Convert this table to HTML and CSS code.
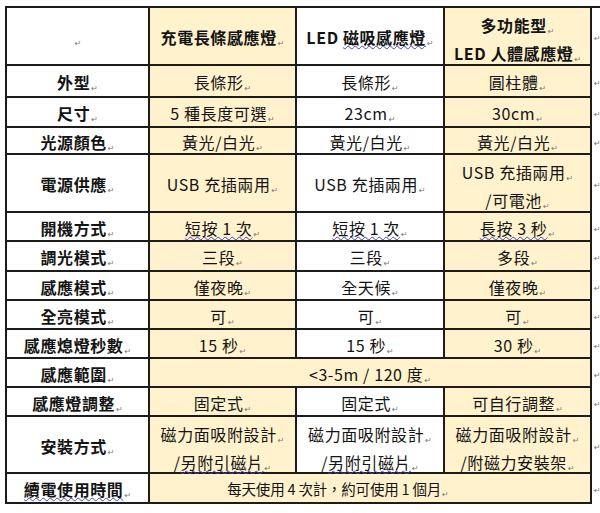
FILE: index.html
```html
<!DOCTYPE html>
<html lang="zh-Hant">
<head>
<meta charset="utf-8">
<link rel="stylesheet" href="styles.css">
<title>感應燈比較</title>
</head>
<body>
<div class="sheet">
  <div class="grid">
    <div class="c lab"><span><span class="pm">↵</span></span></div>
    <div class="c y b"><span>充電長條感應燈<span class="pm">↵</span></span></div>
    <div class="c b"><span>LED <span class="sp">磁吸感應燈</span><span class="pm">↵</span></span></div>
    <div class="c y b two"><span class="ln">多功能型<span class="pm">↵</span></span><span class="ln">LED 人體感應燈<span class="pm">↵</span></span></div>
    <div class="e"><span class="pm">↵</span></div>

    <div class="c lab"><span>外型<span class="pm">↵</span></span></div>
    <div class="c y"><span>長條形<span class="pm">↵</span></span></div>
    <div class="c"><span>長條形<span class="pm">↵</span></span></div>
    <div class="c y"><span>圓柱體<span class="pm">↵</span></span></div>
    <div class="e"><span class="pm">↵</span></div>

    <div class="c lab"><span>尺寸<span class="pm">↵</span></span></div>
    <div class="c y"><span>5 種長度可選<span class="pm">↵</span></span></div>
    <div class="c"><span>23cm<span class="pm">↵</span></span></div>
    <div class="c y"><span>30cm<span class="pm">↵</span></span></div>
    <div class="e"><span class="pm">↵</span></div>

    <div class="c lab"><span>光源顏色<span class="pm">↵</span></span></div>
    <div class="c y"><span>黃光/白光<span class="pm">↵</span></span></div>
    <div class="c"><span>黃光/白光<span class="pm">↵</span></span></div>
    <div class="c y"><span>黃光/白光<span class="pm">↵</span></span></div>
    <div class="e"><span class="pm">↵</span></div>

    <div class="c lab"><span>電源供應<span class="pm">↵</span></span></div>
    <div class="c y"><span>USB 充插兩用<span class="pm">↵</span></span></div>
    <div class="c"><span>USB 充插兩用<span class="pm">↵</span></span></div>
    <div class="c y two"><span class="ln">USB 充插兩用<span class="pm">↵</span></span><span class="ln">/可電池<span class="pm">↵</span></span></div>
    <div class="e"><span class="pm">↵</span></div>

    <div class="c lab"><span>開機方式<span class="pm">↵</span></span></div>
    <div class="c y"><span><span class="sp">短按 1 次</span><span class="pm">↵</span></span></div>
    <div class="c"><span><span class="sp">短按 1 次</span><span class="pm">↵</span></span></div>
    <div class="c y"><span><span class="sp">長按 3 秒</span><span class="pm">↵</span></span></div>
    <div class="e"><span class="pm">↵</span></div>

    <div class="c lab"><span>調光模式<span class="pm">↵</span></span></div>
    <div class="c y"><span>三段<span class="pm">↵</span></span></div>
    <div class="c"><span>三段<span class="pm">↵</span></span></div>
    <div class="c y"><span>多段<span class="pm">↵</span></span></div>
    <div class="e"><span class="pm">↵</span></div>

    <div class="c lab"><span>感應模式<span class="pm">↵</span></span></div>
    <div class="c y"><span>僅夜晚<span class="pm">↵</span></span></div>
    <div class="c"><span>全天候<span class="pm">↵</span></span></div>
    <div class="c y"><span>僅夜晚<span class="pm">↵</span></span></div>
    <div class="e"><span class="pm">↵</span></div>

    <div class="c lab"><span>全亮模式<span class="pm">↵</span></span></div>
    <div class="c y"><span>可<span class="pm">↵</span></span></div>
    <div class="c"><span>可<span class="pm">↵</span></span></div>
    <div class="c y"><span>可<span class="pm">↵</span></span></div>
    <div class="e"><span class="pm">↵</span></div>

    <div class="c lab"><span>感應熄燈秒數<span class="pm">↵</span></span></div>
    <div class="c y"><span>15 秒<span class="pm">↵</span></span></div>
    <div class="c"><span>15 秒<span class="pm">↵</span></span></div>
    <div class="c y"><span>30 秒<span class="pm">↵</span></span></div>
    <div class="e"><span class="pm">↵</span></div>

    <div class="c lab"><span>感應範圍<span class="pm">↵</span></span></div>
    <div class="c y span3"><span>&lt;3-5m / 120 度<span class="pm">↵</span></span></div>
    <div class="e"><span class="pm">↵</span></div>

    <div class="c lab"><span>感應燈調整<span class="pm">↵</span></span></div>
    <div class="c y"><span>固定式<span class="pm">↵</span></span></div>
    <div class="c"><span>固定式<span class="pm">↵</span></span></div>
    <div class="c y"><span>可自行調整<span class="pm">↵</span></span></div>
    <div class="e"><span class="pm">↵</span></div>

    <div class="c lab"><span>安裝方式<span class="pm">↵</span></span></div>
    <div class="c y two"><span class="ln">磁力面吸附設計<span class="pm">↵</span></span><span class="ln">/<span class="sp">另附引磁片</span><span class="pm">↵</span></span></div>
    <div class="c two"><span class="ln">磁力面吸附設計<span class="pm">↵</span></span><span class="ln">/<span class="sp">另附引磁片</span><span class="pm">↵</span></span></div>
    <div class="c y two"><span class="ln">磁力面吸附設計<span class="pm">↵</span></span><span class="ln">/附磁力安裝架<span class="pm">↵</span></span></div>
    <div class="e"><span class="pm">↵</span></div>

    <div class="c lab"><span><span class="sp">續電使用時間</span><span class="pm">↵</span></span></div>
    <div class="c y span3 last"><span>每天使用 4 次計，約可使用 1 個月<span class="pm">↵</span></span></div>
    <div class="e"><span class="pm">↵</span></div>
  </div>
</div>
</body>
</html>
```

FILE: styles.css
```css
html, body {
  margin: 0;
  padding: 0;
  background: #ffffff;
}

body {
  font-family: "Noto Sans CJK TC", "Noto Sans", sans-serif;
  color: #141414;
}

.sheet {
  padding: 6px 0 0 5px;
}

.grid {
  display: grid;
  grid-template-columns: 145px 147px 148px 147px 6px;
  grid-template-rows: 58px 32px 30px 27px 58px 29px 30px 29px 29px 29px 29px 29px 57px 30px;
  border-top: 2px solid #1c1c1c;
  width: 595px;
}

.c {
  box-sizing: border-box;
  border-right: 2px solid #1c1c1c;
  border-bottom: 2px solid #1c1c1c;
  display: flex;
  align-items: center;
  justify-content: center;
  text-align: center;
  font-size: 16px;
  letter-spacing: 0.6px;
  line-height: 22px;
  padding-top: 2px;
  white-space: nowrap;
  background: #ffffff;
}

.lab {
  border-left: 2px solid #1c1c1c;
  font-weight: 700;
}

.b {
  font-weight: 700;
}

.y {
  background: #fff2cc;
}

.two {
  flex-direction: column;
  justify-content: flex-start;
  align-items: center;
  gap: 6px;
  padding-top: 6px;
}

.ln {
  display: block;
  line-height: 22px;
}

.span3 {
  grid-column: span 3;
}

.last {
  padding-right: 64px;
  font-size: 14.5px;
  letter-spacing: -0.2px;
}

.e {
  display: flex;
  align-items: center;
  padding-left: 1px;
  line-height: 1;
}

.pm {
  font-family: "DejaVu Sans", sans-serif;
  font-size: 8px;
  line-height: 1;
  font-weight: 400;
  color: #777777;
  letter-spacing: 0;
  margin-left: 1px;
  position: relative;
  top: 2px;
}

.sp {
  text-decoration: underline wavy #4848c0;
  text-decoration-thickness: 1px;
  text-underline-offset: 1px;
  text-decoration-skip-ink: none;
}
```
